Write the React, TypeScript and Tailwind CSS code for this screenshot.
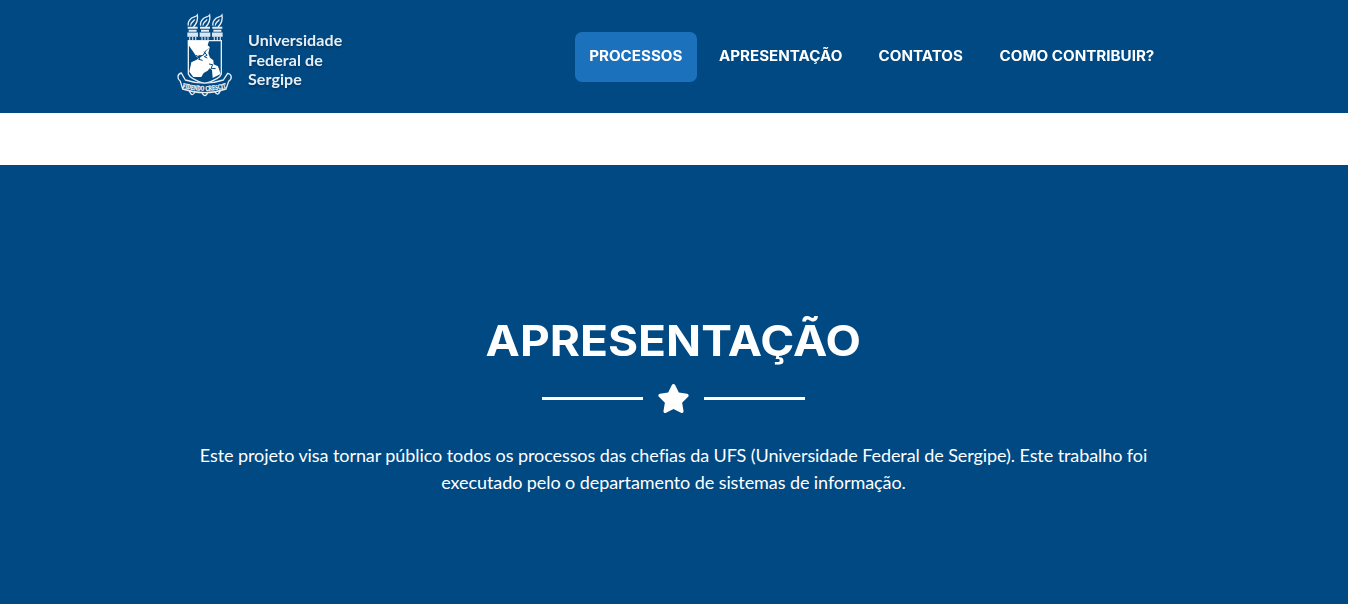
import { FaStar } from "react-icons/fa";

function Crest() {
  return (
    <svg viewBox="0 0 210 300" className="h-[100px] w-[70px] shrink-0" aria-hidden="true">
      <g fill="none" stroke="#e6eef5" strokeWidth="4">
        {[68, 105, 142].map((x) => (
          <g key={x} transform={`translate(${x} 0)`}>
            <path d="M-13 62 C-16 50 -8 44 -4 40 C0 36 10 36 14 30 C17 46 10 58 2 66 M-6 62 C-8 52 4 50 6 43" />
            <path d="M-15 68 H15 M-12 77 H12" strokeWidth="6" />
            <path d="M-16 89 H16" strokeWidth="13" stroke="#dbe6f0" />
            <path d="M-9 96 V106 M0 96 V106 M9 96 V106" stroke="#b9cde0" />
          </g>
        ))}
        <path d="M55 107 H154 V207 Q150 222 104 236 Q60 222 55 207 Z" />
      </g>
      <path fill="#fff" d="M55 107 L117 108 L113 121 L120 127 L106 137 L98 150 L86 151 L82 158 L55 119 Z" />
      <path fill="#fff" d="M88 158 L102 150 L108 138 L119 127 L115 145 L120 158 L130 166 L131 178 L144 184 L152 207 L128 219 L126 195 L119 190 L113 197 L101 204 L94 216 L70 216 L58 200 L64 172 L80 164 Z" />
      <g fill="none" stroke="#004983" strokeWidth="3">
        <path d="M78 151 L90 158 L86 163 L98 166 M102 140 L111 151 L103 155 L112 159 M117 177 L128 179 L123 190 L137 191" />
      </g>
      <path fill="#004983" stroke="#e6eef5" strokeWidth="4" d="M34 204 C22 207 20 220 31 229 L38 252 Q104 274 168 252 L176 229 C189 219 184 207 173 205 L160 225 Q104 244 46 225 Z" />
      <path id="crest-motto" d="M37 248 Q104 266 171 248" fill="none" />
      <text fill="#fff" stroke="#fff" strokeWidth="0.8" fontSize="21" fontWeight="700" fontFamily="'Liberation Serif', serif">
        <textPath href="#crest-motto" textLength="134" lengthAdjust="spacingAndGlyphs">FIDENDO CRESCIT</textPath>
      </text>
      <g fill="none" stroke="#e6eef5" strokeWidth="4">
        <path d="M58 257 q8 22 17 3 M95 261 q10 22 19 0 M134 259 q10 18 17 -3" />
      </g>
    </svg>
  );
}

const links = [
  { label: "PROCESSOS", box: "w-[122px] rounded-[7px] bg-[#1c71bc]" },
  { label: "APRESENTAÇÃO", box: "w-[154px]" },
  { label: "CONTATOS", box: "w-[112px]" },
  { label: "COMO CONTRIBUIR?", box: "w-[186px]" },
];

export default function App() {
  return (
    <div className="h-[604px] overflow-hidden bg-white font-['Lato',sans-serif] text-white">
      <header className="flex h-[113px] items-start bg-[#004983] pl-[170px]">
        <a href="#top" className="flex w-[405px] pt-[5px]">
          <Crest />
          <span className="ml-[8px] pt-[25px] text-[16px] leading-[19.5px] font-bold tracking-[0.08px] text-[#e6eef5] drop-shadow-[0_2px_1px_rgba(0,20,50,0.4)]">
            Universidade<br />Federal de<br />Sergipe
          </span>
        </a>
        <nav className="flex gap-[7px] pt-[32px] font-['Inter',sans-serif] text-[13.9px] font-bold">
          {links.map((l) => (
            <a key={l.label} href="#secao" className={`flex h-[50px] items-center justify-center whitespace-nowrap pb-[1px] ${l.box}`}>
              <span className="inline-block scale-x-[1.09]">{l.label}</span>
            </a>
          ))}
        </nav>
      </header>
      <section className="mt-[52px] flex h-[439px] flex-col items-center bg-[#004983] pt-[150px] pr-[1px]">
        <h2 className="scale-x-[1.096] font-['Inter',sans-serif] text-[42px] leading-[52px] font-bold">APRESENTAÇÃO</h2>
        <div className="mt-[17px] flex h-[29px] items-center gap-[14px]">
          <span className="h-[3px] w-[101px] bg-white" />
          <FaStar className="h-[29px] w-[33px]" />
          <span className="h-[3px] w-[101px] bg-white" />
        </div>
        <p className="mt-[29px] w-[972px] text-center text-[18px] leading-[27px] tracking-[-0.08px]">
          Este projeto visa tornar público todos os processos das chefias da UFS (Universidade Federal de Sergipe). Este trabalho foi executado pelo o departamento de sistemas de informação.
        </p>
      </section>
    </div>
  );
}
